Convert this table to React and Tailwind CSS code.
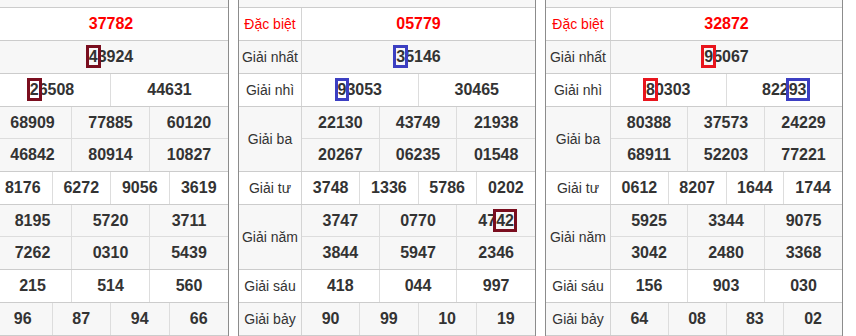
import React from "react";

const HL = {
  maroon: "outline-[#7a0e1f]",
  blue: "outline-[#3c3fc2]",
  red: "outline-[#e8151d]",
};

function Num({ v, red }) {
  if (typeof v === "string") {
    return <span className={red ? "text-[#ff0000]" : ""}>{v}</span>;
  }
  const { t, s, e, c } = v;
  return (
    <span>
      {t.slice(0, s)}
      <span className={`outline-3 outline-solid ${HL[c]}`}>{t.slice(s, e)}</span>
      {t.slice(e)}
    </span>
  );
}

const COLS = {
  1: "grid-cols-1",
  2: "grid-cols-2",
  3: "grid-cols-3",
  4: "grid-cols-4",
};

function Row({ label, lines, bg, labelW, red, hideLabel }) {
  return (
    <div className={`flex border-b border-[#cccccc] ${bg}`}>
      <div
        className={`${labelW} shrink-0 flex items-center justify-center border-r border-[#d4d4d4] text-[14px] ${
          red ? "text-[#ff0000]" : "text-[#333333]"
        }`}
      >
        {hideLabel ? null : label}
      </div>
      <div className="flex-1 flex flex-col divide-y divide-[#dddddd]">
        {lines.map((line, i) => (
          <div
            key={i}
            className={`grid ${COLS[line.length]} h-[32px] divide-x divide-[#dddddd]`}
          >
            {line.map((v, j) => (
              <div
                key={j}
                className="flex items-center justify-center text-[16px] font-bold text-[#333333]"
              >
                <Num v={v} red={red} />
              </div>
            ))}
          </div>
        ))}
      </div>
    </div>
  );
}

function Table({ data, labelW, hideLabel }) {
  const g = "bg-[#f7f7f7]";
  const w = "bg-white";
  const p = { labelW, hideLabel };
  return (
    <div className="w-[298px] shrink-0 border-x border-t border-[#8c8c8c]">
      <div className={`h-[33px] border-b border-[#cccccc] ${g}`} />
      <Row label="Đặc biệt" red lines={[[data.db]]} bg={w} {...p} />
      <Row label="Giải nhất" lines={[[data.g1]]} bg={g} {...p} />
      <Row label="Giải nhì" lines={[data.g2]} bg={w} {...p} />
      <Row label="Giải ba" lines={data.g3} bg={g} {...p} />
      <Row label="Giải tư" lines={[data.g4]} bg={w} {...p} />
      <Row label="Giải năm" lines={data.g5} bg={g} {...p} />
      <Row label="Giải sáu" lines={[data.g6]} bg={w} {...p} />
      <Row label="Giải bảy" lines={[data.g7]} bg={g} {...p} />
    </div>
  );
}

const T1 = {
  db: "37782",
  g1: { t: "43924", s: 0, e: 1, c: "maroon" },
  g2: [{ t: "26508", s: 0, e: 1, c: "maroon" }, "44631"],
  g3: [
    ["68909", "77885", "60120"],
    ["46842", "80914", "10827"],
  ],
  g4: ["8176", "6272", "9056", "3619"],
  g5: [
    ["8195", "5720", "3711"],
    ["7262", "0310", "5439"],
  ],
  g6: ["215", "514", "560"],
  g7: ["96", "87", "94", "66"],
};

const T2 = {
  db: "05779",
  g1: { t: "35146", s: 0, e: 1, c: "blue" },
  g2: [{ t: "93053", s: 0, e: 1, c: "blue" }, "30465"],
  g3: [
    ["22130", "43749", "21938"],
    ["20267", "06235", "01548"],
  ],
  g4: ["3748", "1336", "5786", "0202"],
  g5: [
    ["3747", "0770", { t: "4742", s: 2, e: 4, c: "maroon" }],
    ["3844", "5947", "2346"],
  ],
  g6: ["418", "044", "997"],
  g7: ["90", "99", "10", "19"],
};

const T3 = {
  db: "32872",
  g1: { t: "95067", s: 0, e: 1, c: "red" },
  g2: [
    { t: "80303", s: 0, e: 1, c: "red" },
    { t: "82293", s: 3, e: 5, c: "blue" },
  ],
  g3: [
    ["80388", "37573", "24229"],
    ["68911", "52203", "77221"],
  ],
  g4: ["0612", "8207", "1644", "1744"],
  g5: [
    ["5925", "3344", "9075"],
    ["3042", "2480", "3368"],
  ],
  g6: ["156", "903", "030"],
  g7: ["64", "08", "83", "02"],
};

export default function App() {
  return (
    <div
      className="w-[856px] h-[336px] overflow-hidden bg-white"
      style={{ fontFamily: '"Liberation Sans", Arial, sans-serif' }}
    >
      <div className="flex gap-[9px] -ml-[69px] -mt-[26px]">
        <Table data={T1} labelW="w-[62px]" hideLabel />
        <Table data={T2} labelW="w-[63px]" />
        <Table data={T3} labelW="w-[65px]" />
      </div>
    </div>
  );
}
